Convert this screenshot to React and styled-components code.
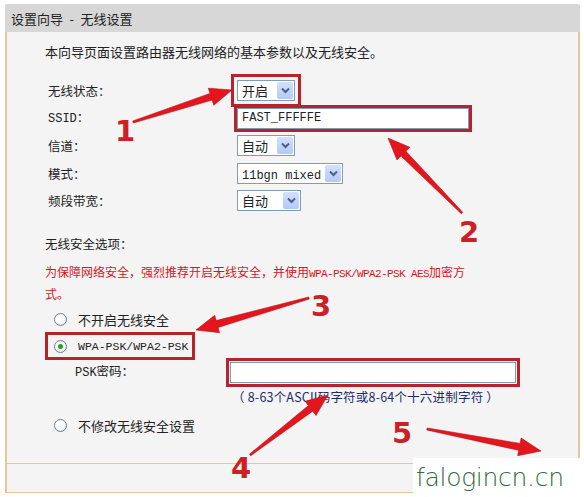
import React from 'react'
import styled, { createGlobalStyle } from 'styled-components'

const GlobalStyle = createGlobalStyle`
  body {
    margin: 0;
    background: #ffffff;
    font-family: "Noto Sans CJK SC", "DejaVu Sans", sans-serif;
  }
`

const Page = styled.div`
  position: relative;
  width: 584px;
  height: 497px;
  overflow: hidden;
  background: #ffffff;
  padding-top: 4px;
  box-sizing: border-box;
`

const Panel = styled.div`
  margin-left: 5px;
  width: 575px;
`

const Header = styled.div`
  height: 28px;
  background: #d7d7d7;
  border-radius: 2px 2px 0 0;
  display: flex;
  align-items: center;
  padding-left: 6px;
  font-size: 13px;
  color: #222;
`

const Body = styled.div`
  box-sizing: border-box;
  height: 431px;
  background: #f4f4f4;
  border-left: 2px solid #e6c69b;
  border-right: 2px solid #e6c69b;
  padding: 10px 0 0 38px;
  color: #222;
`

const Intro = styled.div`
  font-size: 13px;
  line-height: 20px;
`

const FormGrid = styled.div`
  display: grid;
  grid-template-columns: 189px auto;
  grid-auto-rows: 21px;
  row-gap: 6.5px;
  margin-top: 18px;
  padding-left: 3px;
  align-items: center;
`

const Label = styled.div`
  font-size: 12.5px;
  line-height: 21px;
`

const Mono = styled.span`
  font-family: "Liberation Mono", "DejaVu Sans Mono", monospace;
  font-size: ${({ $size }) => $size || 12}px;
  letter-spacing: ${({ $tight }) => ($tight ? '-0.6px' : '0')};
`

const Control = styled.div`
  justify-self: start;
  outline: ${({ $mark }) => ($mark ? '3px solid #b8232b' : 'none')};
  outline-offset: ${({ $offset }) => $offset || 0}px;
`

const SelectBox = styled.div`
  box-sizing: border-box;
  width: ${({ $w }) => $w}px;
  height: 21px;
  border: 1px solid #7f9db9;
  background: #fff;
  display: flex;
  align-items: center;
  justify-content: space-between;
  padding: 0 1px 0 4px;
  font-size: 13px;
`

const DropBtn = styled.span`
  width: 16px;
  height: 17px;
  border-radius: 2px;
  background: linear-gradient(#d3e0fd, #b3c9f6);
  display: flex;
  align-items: center;
  justify-content: center;
`

const TextInput = styled.div`
  box-sizing: border-box;
  width: ${({ $w }) => $w}px;
  height: ${({ $h }) => $h || 21}px;
  border: 1px solid #7f9db9;
  background: #fff;
  display: flex;
  align-items: center;
  padding-left: 4px;
`

const SectionTitle = styled.div`
  margin-top: 23px;
  font-size: 12.5px;
  line-height: 20px;
`

const Warning = styled.div`
  margin-top: 8px;
  width: 440px;
  font-size: 12px;
  line-height: 20px;
  color: #d9141c;
`

const RadioList = styled.div`
  margin-top: ${({ $top }) => $top}px;
  display: flex;
  flex-direction: column;
  align-items: flex-start;
  gap: 7px;
`

const RadioRow = styled.div`
  display: flex;
  align-items: center;
  gap: 11px;
  height: 20px;
  padding: 0 3px 0 2px;
  margin-left: ${({ $mark }) => ($mark ? '4px' : '0')};
  font-size: 13px;
  outline: ${({ $mark }) => ($mark ? '3px solid #b8232b' : 'none')};
  outline-offset: 1px;
`

const RadioDot = styled.span`
  box-sizing: border-box;
  width: 13px;
  height: 13px;
  margin-left: ${({ $mark }) => ($mark ? '3px' : '7px')};
  border-radius: 50%;
  border: 1px solid #6f7d8f;
  background: radial-gradient(circle at 35% 35%, #ffffff 40%, #d8dde3);
  display: flex;
  align-items: center;
  justify-content: center;
  &::after {
    content: '';
    width: 5px;
    height: 5px;
    border-radius: 50%;
    background: ${({ $on }) => ($on ? '#2aa12a' : 'transparent')};
  }
`

const PskRow = styled.div`
  margin-top: 4px;
  display: grid;
  grid-template-columns: 155px auto;
  align-items: center;
  padding-left: 30px;
`

const Hint = styled.div`
  margin-top: 5px;
  padding-left: 187px;
  font-size: 12.5px;
  letter-spacing: 0.2px;
  line-height: 16px;
  color: #1d2b6b;
`

const Footer = styled.div`
  height: 28px;
  background: #f4f4f4;
  border: 2px solid #e6c69b;
  border-top-width: 1px;
  border-bottom-width: 1px;
`

const Overlay = styled.svg`
  position: absolute;
  left: 0;
  top: 0;
  pointer-events: none;
`

const Watermark = styled.div`
  position: absolute;
  right: 0;
  bottom: 0;
  width: 171px;
  height: 39px;
  background: #fff;
  display: flex;
  align-items: center;
  padding-left: 3px;
  box-sizing: border-box;
  font-family: "DejaVu Sans ExtraLight", "DejaVu Sans", sans-serif;
  font-weight: 200;
  font-size: 25px;
  color: #2f6a3c;
  letter-spacing: -0.3px;
`

const Chevron = () => (
  <svg width="9" height="7" viewBox="0 0 9 7">
    <path d="M1 1.5 L4.5 5 L8 1.5" fill="none" stroke="#4c5f86" strokeWidth="2" />
  </svg>
)

const Select = ({ w, children }) => (
  <SelectBox $w={w}>
    <span>{children}</span>
    <DropBtn>
      <Chevron />
    </DropBtn>
  </SelectBox>
)

const arrowPoints = (x1, y1, x2, y2, head = 22, half = 9, tail = 1, neck = 3.5) => {
  const dx = x2 - x1
  const dy = y2 - y1
  const len = Math.hypot(dx, dy)
  const ux = dx / len
  const uy = dy / len
  const nx = -uy
  const ny = ux
  const bx = x2 - ux * head
  const by = y2 - uy * head
  const pts = [
    [x1 + nx * tail, y1 + ny * tail],
    [bx + nx * neck, by + ny * neck],
    [bx + nx * half, by + ny * half],
    [x2, y2],
    [bx - nx * half, by - ny * half],
    [bx - nx * neck, by - ny * neck],
    [x1 - nx * tail, y1 - ny * tail],
  ]
  return pts.map((p) => p.map((v) => v.toFixed(1)).join(',')).join(' ')
}

const arrows = [
  [133, 122, 232, 90],
  [462, 213, 388, 138],
  [309, 298, 196, 330],
  [250, 455, 328, 395],
  [427, 429, 541, 451],
]

const numbers = [
  ['1', 125, 141],
  ['2', 469, 242],
  ['3', 321, 316],
  ['4', 241, 478],
  ['5', 402, 443],
]

export default function App() {
  return (
    <Page>
      <GlobalStyle />
      <Panel>
        <Header>设置向导{'\u2002'}-{'\u2002'}无线设置</Header>
        <Body>
          <Intro>本向导页面设置路由器无线网络的基本参数以及无线安全。</Intro>
          <FormGrid>
            <Label>无线状态：</Label>
            <Control $mark $offset={3}>
              <Select w={58}>开启</Select>
            </Control>
            <Label>
              <Mono $size={12}>SSID</Mono>：
            </Label>
            <Control $mark $offset={0}>
              <TextInput $w={232}>
                <Mono $size={12}>FAST_FFFFFE</Mono>
              </TextInput>
            </Control>
            <Label>信道：</Label>
            <Control>
              <Select w={58}>自动</Select>
            </Control>
            <Label>模式：</Label>
            <Control>
              <Select w={106}>
                <Mono $size={12}>11bgn mixed</Mono>
              </Select>
            </Control>
            <Label>频段带宽：</Label>
            <Control>
              <Select w={64}>自动</Select>
            </Control>
          </FormGrid>

          <SectionTitle>无线安全选项：</SectionTitle>
          <Warning>
            为保障网络安全，强烈推荐开启无线安全，并使用
            <Mono $size={11} $tight>WPA-PSK/WPA2-PSK AES</Mono>
            加密方式。
          </Warning>

          <RadioList $top={5}>
            <RadioRow>
              <RadioDot />
              不开启无线安全
            </RadioRow>
            <RadioRow $mark>
              <RadioDot $on $mark />
              <Mono $size={11.5}>WPA-PSK/WPA2-PSK</Mono>
            </RadioRow>
          </RadioList>

          <PskRow>
            <Label>
              <Mono $size={12}>PSK</Mono>密码：
            </Label>
            <Control $mark $offset={1}>
              <TextInput $w={286} $h={21} />
            </Control>
          </PskRow>
          <Hint>（ 8-63个ASCII码字符或8-64个十六进制字符 ）</Hint>

          <RadioList $top={10}>
            <RadioRow>
              <RadioDot />
              不修改无线安全设置
            </RadioRow>
          </RadioList>
        </Body>
        <Footer />
      </Panel>

      <Overlay width="584" height="497" viewBox="0 0 584 497">
        {arrows.map(([x1, y1, x2, y2], i) => (
          <polygon
            key={i}
            points={arrowPoints(x1, y1, x2, y2)}
            fill="#e3161d"
            stroke="#b51016"
            strokeWidth="0.6"
          />
        ))}
        {numbers.map(([t, x, y]) => (
          <text
            key={t}
            x={x}
            y={y}
            textAnchor="middle"
            fontFamily="DejaVu Sans, sans-serif"
            fontWeight="bold"
            fontSize="29"
            fill="#cc1f26"
          >
            {t}
          </text>
        ))}
      </Overlay>

      <Watermark>falogincn.cn</Watermark>
    </Page>
  )
}
